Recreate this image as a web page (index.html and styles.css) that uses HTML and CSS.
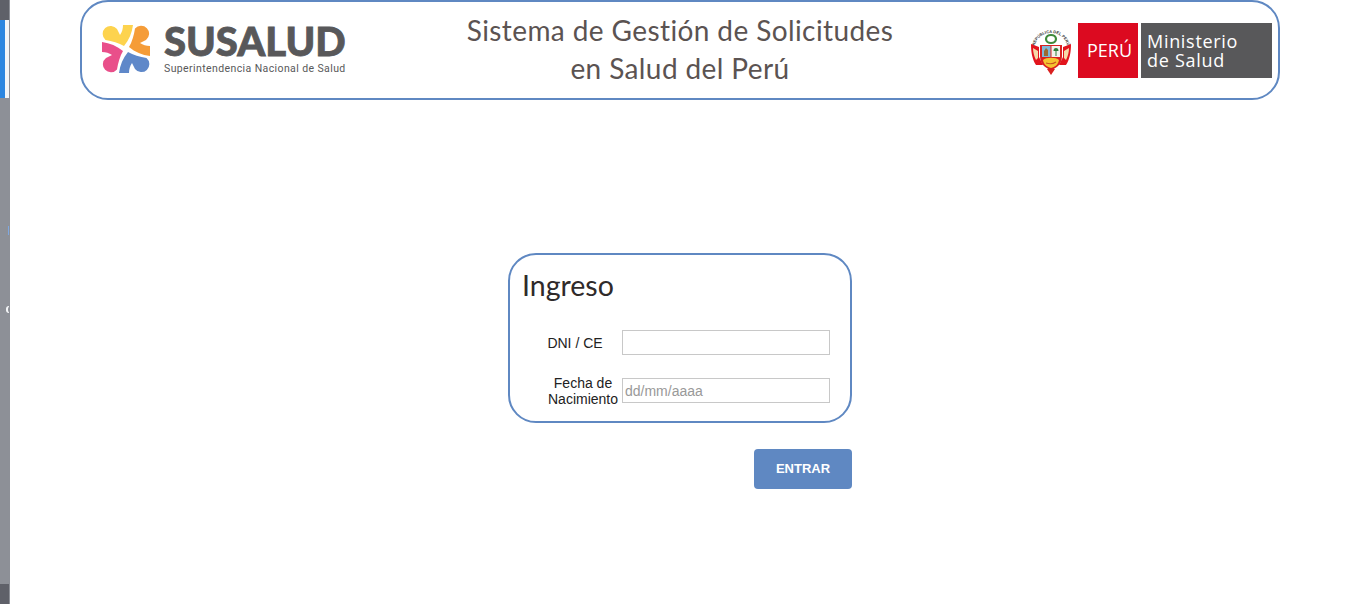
FILE: index.html
```html
<!DOCTYPE html>
<html lang="es">
<head>
<meta charset="utf-8">
<title>Sistema de Gestión de Solicitudes en Salud del Perú</title>
<link rel="stylesheet" href="styles.css">
</head>
<body>
<div class="app">
  <aside class="rail">
    <div class="rail-dark"></div>
    <div class="rail-active"><span class="rail-blue"></span><span class="rail-light"></span></div>
    <span class="rail-tick"></span>
    <span class="rail-chevron"></span>
    <div class="rail-spacer"></div>
    <div class="rail-dark"></div>
  </aside>
  <main class="main">
    <header class="banner">
      <div class="brand">
        <svg class="brand-mark" viewBox="0 0 48 48" aria-hidden="true">
          <defs>
            <path id="petal" d="M3.500 15A8 8 0 1 1 15 4C16 6 17 8 18 10C20 7 21 4 21 0H31C30 8 27 15 22 21C17 18 10 16 3.500 15z"/>
          </defs>
          <use href="#petal" fill="#fdd34e"/>
          <use href="#petal" fill="#f59c38" transform="rotate(90 24 24)"/>
          <use href="#petal" fill="#5f88c9" transform="rotate(180 24 24)"/>
          <use href="#petal" fill="#e94f8a" transform="rotate(270 24 24)"/>
        </svg>
        <div class="brand-text">
          <div class="brand-name">SUSALUD</div>
          <div class="brand-sub">Superintendencia Nacional de Salud</div>
        </div>
      </div>
      <h1 class="banner-title">Sistema de Gestión de Solicitudes<br>en Salud del Perú</h1>
      <div class="gov">
        <svg class="crest" viewBox="0 0 40 52" aria-hidden="true">
          <defs><path id="crest-arc" d="M4 21A16.500 16 0 0 1 36 21"/></defs>
          <text class="crest-text"><textPath href="#crest-arc" startOffset="50%" text-anchor="middle">REPÚBLICA DEL PERÚ</textPath></text>
          <ellipse cx="20" cy="15" rx="5" ry="4" fill="none" stroke="#3f8a3b" stroke-width="2.200"/>
          <path d="M0 20l8 3v10l4 8H5C1 35 0 27 0 20zM40 20l-8 3v10l-4 8h7c4-6 5-14 5-21z" fill="#e2141d"/>
          <path d="M2 24l5 3v7l-2 2C3 32 2 28 2 24zM38 24l-5 3v7l2 2c2-4 3-8 3-12z" fill="#f6d9a8"/>
          <path d="M9 21h22v11c0 8-5 12-11 14C14 44 9 40 9 32z" fill="#d9201f"/>
          <path d="M11 22h8.500v11H11z" fill="#7fb7d8"/>
          <path d="M20.500 22H29v11h-8.500z" fill="#f2f2ec"/>
          <path d="M13 32v-5l2-3 2 2v6z" fill="#9a6a32"/>
          <path d="M24.500 32v-5h1v5zM22.500 27a2.500 3 0 0 1 5 0z" fill="#2e7d3a"/>
          <path d="M12 36c3-3 13-3 16 0c-1 5-4 7-8 8c-4-1-7-3-8-8z" fill="#f5c431"/>
          <path d="M15 39c3 1 7 1 10-1" fill="none" stroke="#c8531f" stroke-width="1.200"/>
          <path d="M16 45h8l-4 6z" fill="#d9201f"/>
        </svg>
        <div class="gov-red">PERÚ</div>
        <div class="gov-grey">Ministerio<br>de Salud</div>
      </div>
    </header>
    <div class="login">
      <form class="card">
        <h2 class="card-title">Ingreso</h2>
        <div class="fields">
          <label class="field-label field-label-short" for="dni">DNI / CE</label>
          <input class="field-input" id="dni" type="text">
          <label class="field-label" for="nac">Fecha de<br>Nacimiento</label>
          <input class="field-input" id="nac" type="text" placeholder="dd/mm/aaaa">
        </div>
      </form>
      <div class="actions"><button class="submit" type="button">ENTRAR</button></div>
    </div>
  </main>
</div>
</body>
</html>
```
FILE: styles.css
```css
* { box-sizing: border-box; }
html, body { margin: 0; height: 100%; background: #fff; overflow: hidden; }
.app { display: flex; height: 604px; }

.rail { flex: 0 0 10px; display: flex; flex-direction: column; background: #8d9097; }
.rail-dark { width: 9px; height: 20px; background: #5f6169; }
.rail-active { display: flex; width: 9px; height: 78px; }
.rail-blue { width: 5px; background: #2b86e0; }
.rail-light { width: 4px; background: #f1f5f8; }
.rail-tick { width: 1px; height: 9px; margin: 128px 0 0 8px; background: #7fa8e0; }
.rail-chevron { width: 3px; height: 7px; margin: 71px 0 0 6px; border: solid #f4f6f8; border-width: 1px 0 1px 2px; border-radius: 3px 0 0 3px; }
.rail-spacer { flex: 1; }

.main { flex: 1; display: flex; flex-direction: column; align-items: center; }

.banner { width: 1200px; height: 100px; display: grid; grid-template-columns: 1fr auto 1fr; align-items: center; padding: 0 6px; border: 2px solid #5f88c2; border-radius: 28px; }
.brand { display: flex; align-items: center; gap: 14px; margin-left: 14px; }
.brand-mark { width: 48px; height: 48px; flex: none; margin-top: -2px; }
.brand-text { color: #58585a; margin-top: -1px; }
.brand-name { font: 900 40px/32px Lato, sans-serif; letter-spacing: 0; -webkit-text-stroke: .8px #58585a; white-space: nowrap; }
.brand-sub { margin-top: 6px; font: 400 10.500px/12px Roboto, sans-serif; letter-spacing: .4px; white-space: nowrap; }

.banner-title { margin: -3px 0 0; font: 400 28px/38px Lato, sans-serif; color: #5b5352; text-align: center; white-space: nowrap; letter-spacing: .4px; }

.gov { display: flex; justify-content: flex-end; align-items: center; }
.crest { width: 40px; height: 52px; margin-right: 7px; }
.crest-text { font: 700 4px "Liberation Sans", sans-serif; fill: #333; }
.gov-red { width: 60px; height: 55px; display: flex; align-items: center; justify-content: center; padding-left: 3px; background: #dc0a20; color: #fff; font: 400 18px "Open Sans", sans-serif; }
.gov-grey { width: 131px; height: 55px; margin-left: 3px; padding: 9px 0 0 6px; background: #58585a; color: #fff; font: 400 18px/19px "Open Sans", sans-serif; letter-spacing: .7px; }

.login { width: 344px; margin-top: 153px; }
.card { height: 170px; padding: 11px 20px 0 12px; border: 2px solid #5f88c2; border-radius: 28px; }
.card-title { margin: 0 0 26px; font: 400 28.500px/38px Lato, sans-serif; color: #2f2a2a; }
.fields { display: grid; grid-template-columns: 72px 208px; grid-template-rows: 25px 33px; column-gap: 3px; row-gap: 19px; margin-left: 25px; align-items: center; }
.field-label { font: 400 14px/16px "Liberation Sans", sans-serif; color: #222; text-align: center; }
.field-label-short { padding-right: 16px; white-space: nowrap; }
.field-input { width: 208px; height: 25px; padding: 0 2px; border: 1px solid #c8c8c8; border-radius: 0; background: #fff; font: 400 14px "Liberation Sans", sans-serif; outline: 0; }
.field-input::placeholder { color: #999; opacity: 1; }

.actions { display: flex; justify-content: flex-end; margin-top: 26px; }
.submit { width: 98px; height: 40px; padding: 0 0 2px; border: 0; border-radius: 4px; background: #5f88c2; color: #fff; font: 700 13px "Liberation Sans", sans-serif; }
```
